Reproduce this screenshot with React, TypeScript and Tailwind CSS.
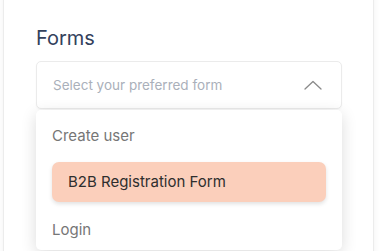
const options = ['Create user', 'B2B Registration Form', 'Login'];

export default function App() {
  const selected = 'B2B Registration Form';

  return (
    <div className="h-[251px] w-[379px] overflow-hidden bg-white font-['Inter',sans-serif]">
      <div className="ml-[3px] -mt-4 h-[300px] w-[371px] rounded-xl border border-[#ececec] bg-white pl-[32px] pt-[39px] shadow-[0_0_6px_rgba(0,0,0,0.06)]">
        <h2 className="text-[20px] leading-[28px] font-normal text-[#33415c]">Forms</h2>
        <div className="relative mt-[9px] w-[306px]">
          <button
            type="button"
            className="flex h-[48px] w-full items-center justify-between rounded-[5px] border border-[#ebebeb] bg-white px-4 text-left shadow-[0_1px_2px_rgba(0,0,0,0.04)]"
          >
            <span className="text-[13.5px] text-[#aab0ba]">Select your preferred form</span>
            <svg width="18" height="10" viewBox="0 0 18 10" className="mr-[3px]" fill="none">
              <polyline points="1,9 9,1.5 17,9" stroke="#8a8a8a" strokeWidth="1.3" strokeLinecap="round" strokeLinejoin="round" />
            </svg>
          </button>
          <ul className="mt-[1px] w-full rounded-[5px] bg-white pt-[6px] shadow-[0_4px_16px_rgba(0,0,0,0.14)]">
            {options.map((opt) =>
              opt === selected ? (
                <li key={opt} className="px-4 pt-[6px] pb-[8px]">
                  <div className="flex h-[40px] items-center rounded-[7px] bg-[#fbcfbb] px-4 text-[15px] text-[#2e2e2e] shadow-[0_2px_4px_rgba(0,0,0,0.12)]">
                    {opt}
                  </div>
                </li>
              ) : (
                <li key={opt} className="flex h-[40px] items-center px-4 text-[15px] text-[#767676]">
                  {opt}
                </li>
              ),
            )}
          </ul>
        </div>
      </div>
    </div>
  );
}
